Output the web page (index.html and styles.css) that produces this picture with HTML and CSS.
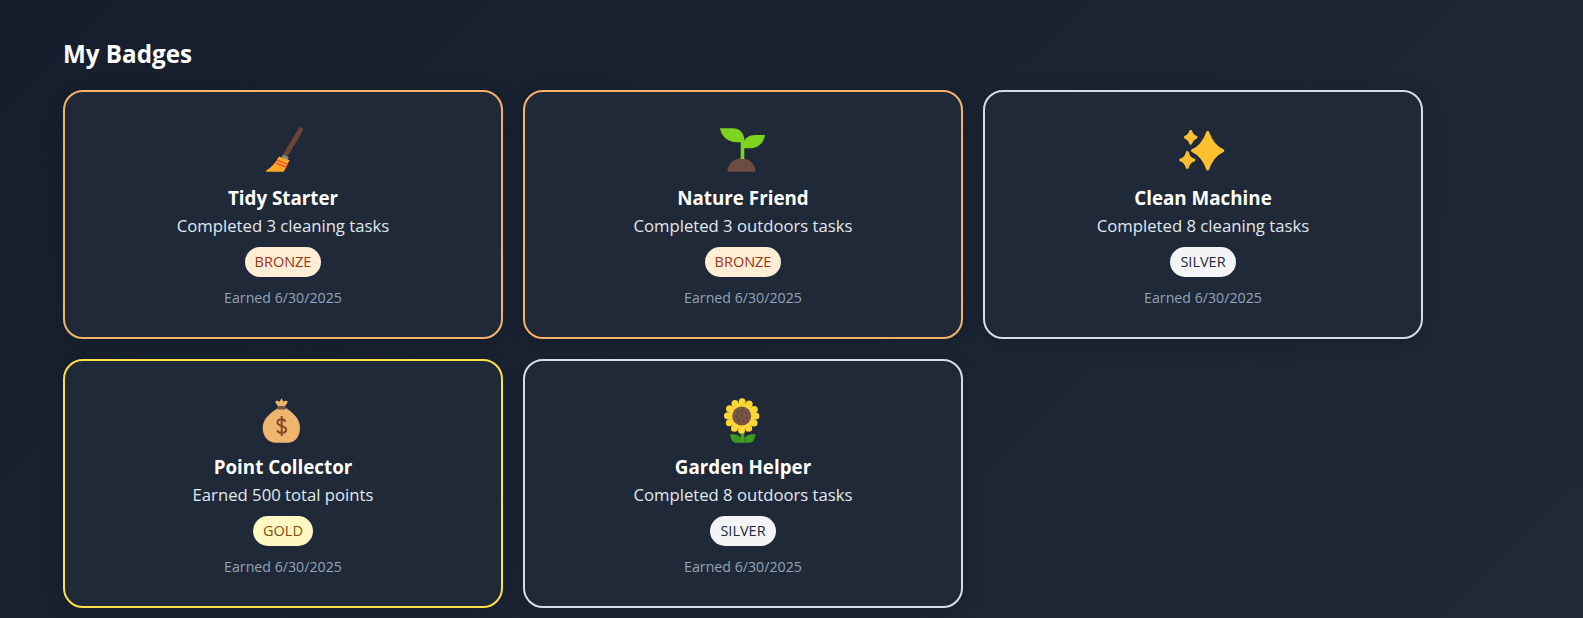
FILE: index.html
```html
<!DOCTYPE html>
<html lang="en">
<head>
    <meta charset="UTF-8">
    <meta name="viewport" content="width=device-width, initial-scale=1.0">
    <title>My Badges</title>
    <link rel="stylesheet" href="styles.css">
</head>
<body>

    <h2 class="page-title">My Badges</h2>

    <div class="badge-grid">

        <div class="badge-card bronze">
            <svg class="badge-icon" viewBox="0 0 48 48">
                <path d="M41.500 4L26.500 29" stroke="#6d4534" stroke-width="5" stroke-linecap="round" fill="none"/>
                <path d="M24 28.500l5.800 3-1 2.800-6.300-3z" fill="#8a8a8a"/>
                <path d="M20 30.500l10.500 3.800-5.300 10.700c-.2.500-.6.800-1.200.800H8c-1 0-1.300-.7-.6-1.400C12.500 41 17 36.500 20 30.500z" fill="#ffa726"/>
                <path d="M18.500 34.300l10.800 4.200M17 37.200l10.800 4.200" stroke="#f44336" stroke-width="1.300" fill="none"/>
            </svg>
            <div class="badge-name">Tidy Starter</div>
            <div class="badge-desc">Completed 3 cleaning tasks</div>
            <span class="badge-tier tier-bronze">BRONZE</span>
            <div class="badge-date">Earned 6/30/2025</div>
        </div>

        <div class="badge-card bronze">
            <svg class="badge-icon" viewBox="0 0 48 48">
                <path d="M8.300 45.700C9 38 14.500 32.300 22.500 32.300S36 38 36.700 45.700z" fill="#6d4c41"/>
                <path d="M21.700 33V12h3.600v21z" fill="#7ed321"/>
                <path d="M1 2.300h13c6.500 0 10.500 4.500 11.300 10.700l-1 3.300H18C9 16.300 2.500 11 1 2.300z" fill="#7ed321"/>
                <path d="M24.300 17c1.700-5 5.700-8 11.700-8h10c-1 7-6 13-14 13.300h-7.700z" fill="#7ed321"/>
            </svg>
            <div class="badge-name">Nature Friend</div>
            <div class="badge-desc">Completed 3 outdoors tasks</div>
            <span class="badge-tier tier-bronze">BRONZE</span>
            <div class="badge-date">Earned 6/30/2025</div>
        </div>

        <div class="badge-card silver">
            <svg class="badge-icon" viewBox="0 0 48 48">
                <g fill="#fbc02d" stroke="#fbc02d" stroke-width="3" stroke-linejoin="round">
                    <path d="M28.700 6.500Q33.500 20 43.800 24.700 33.500 29.500 28.700 43 24 29.500 13.500 24.700 24 20 28.700 6.500z"/>
                    <path d="M11.700 5.500Q13 10 17 11.300 13 12.700 11.700 17.200 10.500 12.700 6.500 11.300 10.500 10 11.700 5.500z"/>
                    <path d="M8.300 26.500Q9.800 32.500 14.800 34 9.800 35.500 8.300 41.500 6.800 35.500 1.800 34 6.800 32.500 8.300 26.500z"/>
                </g>
            </svg>
            <div class="badge-name">Clean Machine</div>
            <div class="badge-desc">Completed 8 cleaning tasks</div>
            <span class="badge-tier tier-silver">SILVER</span>
            <div class="badge-date">Earned 6/30/2025</div>
        </div>

        <div class="badge-card gold">
            <svg class="badge-icon" viewBox="0 0 48 48">
                <path d="M19 13C11 18 3.700 24 3.700 33c0 9 6 14.700 13 14.700h12c7 0 12.300-5.700 12.300-14.700 0-9-6.500-15-14-20z" fill="#efb56f"/>
                <path d="M18.500 10.500h8l.5 4h-9z" fill="#795548"/>
                <path d="M17 8.500c-1-1.500-.5-2.500.5-2.700 1.200-.2 2.300.3 3 1L22.500 3.300l2 3.500c.7-.7 1.800-1.200 3-1 1 .2 1.500 1.200.5 2.700l-2 2.500h-7z" fill="#efb56f"/>
                <path d="M26.300 27c-.5-1.700-2-2.700-3.800-2.700-2.300 0-4 1.300-4 3.300 0 4.400 8.700 2.600 8.700 7 0 2.100-1.900 3.400-4.500 3.400-2.200 0-3.800-1-4.500-2.700M22.700 21v20" stroke="#7d4a2b" stroke-width="2" fill="none"/>
            </svg>
            <div class="badge-name">Point Collector</div>
            <div class="badge-desc">Earned 500 total points</div>
            <span class="badge-tier tier-gold">GOLD</span>
            <div class="badge-date">Earned 6/30/2025</div>
        </div>

        <div class="badge-card silver">
            <svg class="badge-icon" viewBox="0 0 48 48">
                <path d="M21.700 33h3.600v14.700h-3.600z" fill="#4e9a2a"/>
                <path d="M11 39.500c5-1 9 .5 11 3.500v4.700h-5.500c-3 0-4.500-3.700-5.500-8.200z" fill="#3c9a1e"/>
                <path d="M36.700 39.500c-5-1-9 .5-11.400 3.500v4.700H31c3 0 4.700-3.700 5.700-8.200z" fill="#3c9a1e"/>
                <circle cx="22.700" cy="21" r="13" fill="#fdd835"/>
                <circle cx="22.700" cy="21" r="14.200" fill="none" stroke="#fdd835" stroke-width="7" stroke-linecap="round" stroke-dasharray="0 7.435"/>
                <circle cx="22.700" cy="21" r="9.500" fill="#795548"/>
                <circle cx="19" cy="17" r="1" fill="#5d4037"/>
                <circle cx="23" cy="15.500" r="1" fill="#5d4037"/>
                <circle cx="27" cy="18" r="1" fill="#5d4037"/>
                <circle cx="17.500" cy="21.500" r="1" fill="#5d4037"/>
                <circle cx="22.500" cy="20.500" r="1" fill="#5d4037"/>
                <circle cx="27.500" cy="22.500" r="1" fill="#5d4037"/>
                <circle cx="20" cy="25.500" r="1" fill="#5d4037"/>
                <circle cx="24.500" cy="26" r="1" fill="#5d4037"/>
            </svg>
            <div class="badge-name">Garden Helper</div>
            <div class="badge-desc">Completed 8 outdoors tasks</div>
            <span class="badge-tier tier-silver">SILVER</span>
            <div class="badge-date">Earned 6/30/2025</div>
        </div>

    </div>

</body>
</html>
```

FILE: styles.css
```css
body {
    font-family: "Open Sans", "Noto Sans", sans-serif;
    background: linear-gradient(135deg, #161e2d, #1f2937);
    color: #fff;
    margin: 0;
    height: 618px;
    overflow: hidden;
    padding: 38px 63px 0;
    box-sizing: border-box;
}

.page-title {
    font-size: 24.2px;
    line-height: 32px;
    font-weight: 700;
    margin: 0 0 20px;
}

.badge-grid {
    display: grid;
    grid-template-columns: repeat(3, 440px);
    gap: 20px;
}

.badge-card {
    display: flex;
    flex-direction: column;
    align-items: center;
    box-sizing: border-box;
    height: 249px;
    padding: 34px 20px 0;
    background-color: #1f2937;
    border: 2px solid #ccc;
    border-radius: 20px;
    box-shadow: 0 4px 20px rgba(0, 0, 0, 0.15);
}

.badge-card.bronze {
    border-color: #f6b26b;
}

.badge-card.silver {
    border-color: #d5dde5;
}

.badge-card.gold {
    border-color: #fde047;
}

.badge-icon {
    width: 48px;
    height: 48px;
    margin-bottom: 11px;
}

.badge-name {
    font-size: 18.8px;
    line-height: 26px;
    font-weight: 700;
    margin-bottom: 2px;
}

.badge-desc {
    font-size: 16.7px;
    line-height: 26px;
    color: #e2e8f0;
    margin-bottom: 8px;
}

.badge-tier {
    font-size: 14.5px;
    font-weight: 500;
    line-height: 20px;
    padding: 5px 10px;
    border-radius: 15px;
    margin-bottom: 11px;
}

.tier-bronze {
    background-color: #ffedd5;
    color: #9a3412;
}

.tier-silver {
    background-color: #f3f4f6;
    color: #1f2937;
}

.tier-gold {
    background-color: #fef9c3;
    color: #854d0e;
}

.badge-date {
    font-size: 14.2px;
    line-height: 20px;
    color: #94a3b8;
}
```
